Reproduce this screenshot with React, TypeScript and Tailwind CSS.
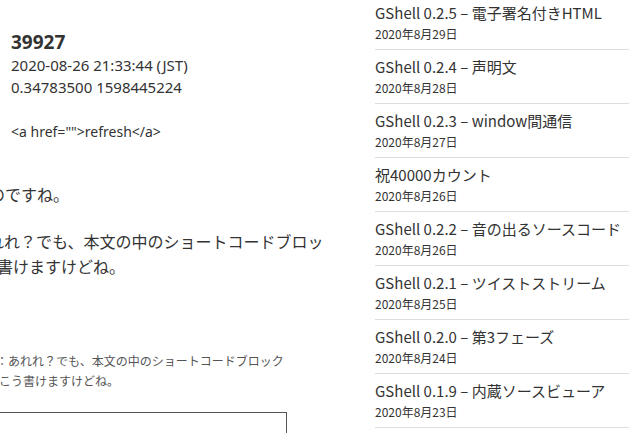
const posts = [
  { title: "GShell 0.2.5 – 電子署名付きHTML", date: "2020年8月29日" },
  { title: "GShell 0.2.4 – 声明文", date: "2020年8月28日" },
  { title: "GShell 0.2.3 – window間通信", date: "2020年8月27日" },
  { title: "祝40000カウント", date: "2020年8月26日" },
  { title: "GShell 0.2.2 – 音の出るソースコード", date: "2020年8月26日" },
  { title: "GShell 0.2.1 – ツイストストリーム", date: "2020年8月25日" },
  { title: "GShell 0.2.0 – 第3フェーズ", date: "2020年8月24日" },
  { title: "GShell 0.1.9 – 内蔵ソースビューア", date: "2020年8月23日" },
];

export default function App() {
  return (
    <div
      className="flex h-[433px] w-[640px] overflow-hidden bg-white text-[#333]"
      style={{ fontFamily: '"Noto Sans", "Noto Sans CJK JP", sans-serif' }}
    >
      {/* main column (cut off on the left) */}
      <main className="w-[326px] shrink-0 overflow-hidden">
        <div className="pl-[11px] pt-[30px]">
          <h2 className="text-[19px] font-bold leading-[24px]">39927</h2>
          <p className="text-[15px] leading-[22px]">2020-08-26 21:33:44 (JST)</p>
          <p className="text-[15px] leading-[22px]">0.34783500 1598445224</p>
          <p className="mt-[23px] text-[14px] leading-[22px]">{'<a href="">refresh</a>'}</p>
        </div>

        <div className="mt-[40px] whitespace-nowrap text-[16px] leading-[25px]">
          <p className="-ml-[11px]">のですね。</p>
          <div className="mt-[22px]">
            <p className="-ml-[28px]">あれれ？でも、本文の中のショートコードブロッ</p>
            <p className="-ml-[51px]">とこう書けますけどね。</p>
          </div>
        </div>

        <div className="mt-[72px] whitespace-nowrap text-[12px] leading-[20px] text-[#555]">
          <p className="-ml-[4px]">：あれれ？でも、本文の中のショートコードブロック</p>
          <p className="-ml-[1px]">こう書けますけどね。</p>
        </div>

        <div className="-ml-[10px] mt-[20px] h-[60px] w-[297px] border border-[#555]" />
      </main>

      {/* sidebar */}
      <aside
        className="ml-[49px] w-[254px] shrink-0"
        style={{ fontFamily: '"Noto Sans CJK JP", "Noto Sans", sans-serif' }}
      >
        <ul className="-mt-[4px]">
          {posts.map((p) => (
            <li key={p.title} className="border-b border-[#ddd] pb-[6px] pt-[7px]">
              <a className="block whitespace-nowrap text-[15px] leading-[20px]">{p.title}</a>
              <span className="mt-[2px] block text-[12px] leading-[18px]">{p.date}</span>
            </li>
          ))}
        </ul>
      </aside>
    </div>
  );
}
